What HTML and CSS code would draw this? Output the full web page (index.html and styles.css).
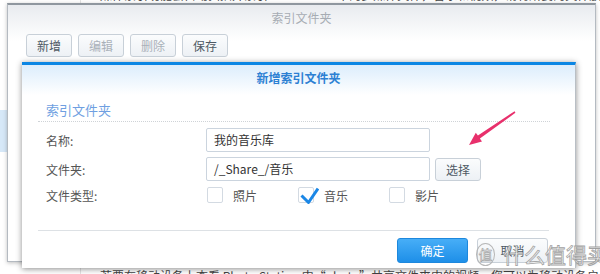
FILE: index.html
```html
<!DOCTYPE html>
<html lang="zh-CN">
<head>
    <meta charset="UTF-8">
    <meta name="viewport" content="width=device-width, initial-scale=1.0">
    <title>新增索引文件夹</title>
    <link rel="stylesheet" href="styles.css">
</head>
<body>
    <div class="page">
        <div class="side">
            <div class="side-item"></div>
        </div>
        <div class="article">
            <p class="article-top">媒体索引功能会自动扫描并索引 DiskStation 中的多媒体文件，音乐和视频，请将所要的文件放置在已经建立索引的文件夹中</p>
            <p class="article-bottom">若要在移动设备上查看 Photo Station 中“photo”共享文件夹内的视频，您可以为移动设备启用视频格式转换</p>
        </div>
    </div>

    <div class="win-back">
        <div class="win-back-title">索引文件夹</div>
        <div class="toolbar">
            <button class="btn">新增</button>
            <button class="btn disabled">编辑</button>
            <button class="btn disabled">删除</button>
            <button class="btn">保存</button>
        </div>
    </div>

    <div class="dialog">
        <div class="dialog-title">新增索引文件夹</div>
        <div class="dialog-body">
            <div class="section">索引文件夹</div>
            <div class="row">
                <label class="label">名称:</label>
                <div class="input">我的音乐库</div>
            </div>
            <div class="row">
                <label class="label">文件夹:</label>
                <div class="input">/_Share_/音乐</div>
                <button class="btn btn-pick">选择</button>
            </div>
            <div class="row row-types">
                <label class="label">文件类型:</label>
                <div class="opt"><span class="box"></span>照片</div>
                <div class="opt"><span class="box"><svg class="check" width="20" height="18" viewBox="0 0 20 18"><path d="M2.5 8.5 L9.5 15.5 L19 1.5" fill="none" stroke="#1b87e6" stroke-width="3" stroke-linejoin="round"/></svg></span>音乐</div>
                <div class="opt"><span class="box"></span>影片</div>
            </div>
        </div>
        <div class="dialog-foot">
            <button class="btn btn-ok">确定</button>
            <button class="btn btn-cancel">取消</button>
        </div>
    </div>

    <svg class="arrow" width="600" height="274" viewBox="0 0 600 274">
        <polygon points="514.6,111.2 477.9,135.6 475.8,132.8 469,145 482,141.4 479.9,138.6 515.4,112.8" fill="#e8306c"/>
    </svg>

    <div class="watermark">
        <span class="wm-logo">值</span>
        <span class="wm-text">什么值得买</span>
    </div>
</body>
</html>
```

FILE: styles.css
```css
body {
    margin: 0;
    width: 600px;
    height: 274px;
    overflow: hidden;
    position: relative;
    background: #fff;
    font-family: "Noto Sans CJK SC", "Liberation Sans", sans-serif;
    font-size: 12px;
    color: #333;
}
button {
    font-family: inherit;
}
.page {
    display: flex;
    height: 274px;
}
.side {
    width: 80px;
}
.side-item {
    margin-top: 110px;
    width: 8px;
    height: 42px;
    background: #d6e8f8;
}
.article {
    flex: 1;
    display: flex;
    flex-direction: column;
    justify-content: space-between;
    border-left: 1px solid #e4e4e4;
    padding-left: 19px;
    white-space: nowrap;
    overflow: hidden;
}
.article p {
    margin: 0;
    font-size: 12px;
    line-height: 16px;
    color: #444;
}
.article-top {
    margin-top: -13px !important;
}
.article-bottom {
    margin-bottom: -10px !important;
}

/* back window */
.win-back {
    position: absolute;
    left: 7px;
    top: 3px;
    width: 589px;
    height: 259px;
    box-sizing: border-box;
    border: 1px solid #b4bac1;
    border-top: 2px solid #8f979f;
    background: linear-gradient(#e8ebef, #fff 36px);
    box-shadow: 0 1px 4px rgba(0,0,0,0.25);
}
.win-back-title {
    height: 25px;
    line-height: 25px;
    text-align: center;
    color: #a6acb3;
    font-size: 12px;
}
.toolbar {
    display: flex;
    gap: 6px;
    padding: 4px 0 0 18px;
}
.btn {
    width: 46px;
    height: 23px;
    padding: 0;
    border: 1px solid #c8d0d8;
    border-radius: 3px;
    background: linear-gradient(#fbfcfd, #edf1f5);
    color: #4e5964;
    font-size: 12px;
    line-height: 21px;
}
.btn.disabled {
    color: #aab1b9;
}

/* dialog */
.dialog {
    position: absolute;
    left: 22px;
    top: 62px;
    width: 554px;
    height: 206px;
    box-sizing: border-box;
    border-top: 3px solid #0b86e4;
    border-right: 1px solid #b9bfc5;
    background: #fff;
    box-shadow: 0 1px 6px rgba(0,0,0,0.45);
}
.dialog-title {
    height: 30px;
    line-height: 26px;
    text-align: center;
    background: linear-gradient(#dcedfc, #fff);
    color: #2c80d3;
    font-weight: bold;
    font-size: 12px;
}
.dialog-body {
    padding: 0 25px 0 16px;
}
.section {
    padding: 4px 0 0 8px;
    line-height: 22px;
    font-size: 13px;
    color: #6f9fe1;
    border-bottom: 1px dotted #cfd3d7;
}
.row {
    display: flex;
    align-items: center;
    height: 24px;
    margin-top: 6px;
}
.row + .row {
    margin-top: 5px;
}
.row-types {
    margin-top: 3px !important;
    height: 22px;
}
.label {
    width: 168px;
    padding-left: 8px;
    box-sizing: border-box;
    color: #555;
}
.input {
    width: 224px;
    height: 24px;
    box-sizing: border-box;
    border: 1px solid #cbd4de;
    border-radius: 2px;
    padding: 0 7px;
    line-height: 22px;
    color: #333;
}
.btn-pick {
    margin-left: 5px;
    height: 23px;
}
.opt {
    display: flex;
    align-items: center;
    gap: 10px;
    width: 91px;
    color: #555;
}
.opt:first-of-type {
    margin-left: 1px;
}
.box {
    position: relative;
    width: 16px;
    height: 16px;
    box-sizing: border-box;
    border: 1px solid #d3dae2;
    border-radius: 2px;
    background: #fff;
}
.check {
    position: absolute;
    left: 0px;
    top: -1px;
}
.dialog-foot {
    margin: 24px 26px 0 16px;
    border-top: 1px solid #dde1e5;
    padding-top: 7px;
    display: flex;
    justify-content: flex-end;
    gap: 9px;
}
.dialog-foot .btn {
    width: 71px;
    height: 25px;
    line-height: 23px;
}
.btn-ok {
    background: linear-gradient(#47aef7, #1e8fe8);
    border-color: #1d88dd;
    color: #fff;
}
.btn-cancel {
    margin-right: 1px;
}

/* overlays */
.arrow {
    position: absolute;
    left: 0;
    top: 0;
}
.watermark {
    position: absolute;
    left: 476px;
    top: 240px;
    display: flex;
    align-items: center;
    gap: 8px;
    opacity: 0.9;
}
.wm-logo {
    width: 17px;
    height: 21px;
    border: 1px solid #b0b0b0;
    border-radius: 50%;
    text-align: center;
    line-height: 21px;
    font-size: 14px;
    color: #fff;
    -webkit-text-stroke: 0.6px #999;
}
.wm-text {
    font-size: 21px;
    line-height: 28px;
    color: #fff;
    -webkit-text-stroke: 0.8px #999;
    white-space: nowrap;
}
```
